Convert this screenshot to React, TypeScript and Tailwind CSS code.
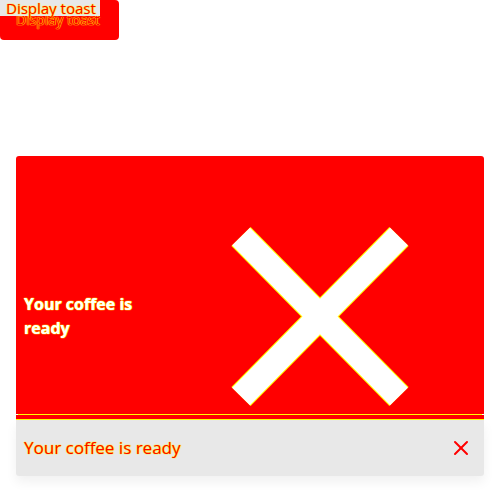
import { X } from 'lucide-react'

const outline = '[text-shadow:0_0_1px_#ffff00,0_0_1px_#ffff00,0_0_1px_#ffff00]'

export default function App() {
  return (
    <div className="relative w-[500px] h-[500px] bg-white font-['Open_Sans',sans-serif]">
      {/* trigger button */}
      <button className="relative flex items-center h-10 w-[119px] pl-4 rounded bg-[#ff0000] text-[14px] leading-6">
        <span className={`text-[#ff0000] ${outline} -mt-[1px]`}>Display toast</span>
        <span className={`absolute left-0 top-0 h-4 w-[100px] bg-[#e8e8e8] text-[15px] leading-4 pl-1.5 text-left text-[#ff0000] ${outline}`}>
          Display toast
        </span>
      </button>

      {/* toast viewport */}
      <div className="absolute left-4 right-4 top-[156px] flex flex-col">
        <div className="h-[258px] bg-[#ff0000] rounded-t-[3px] flex items-start px-2">
          <div className={`w-[130px] mt-[136px] text-white font-bold text-base leading-6 ${outline}`}>
            Your coffee is ready
          </div>
          <svg width="200" height="200" viewBox="0 0 200 200" className="ml-[62px] mt-[60px]">
            <g stroke="#ffff00" strokeWidth="27">
              <line x1="25" y1="20.5" x2="183" y2="180.5" />
              <line x1="183" y1="20.5" x2="25" y2="180.5" />
            </g>
            <g stroke="#ffffff" strokeWidth="25">
              <line x1="25" y1="20.5" x2="183" y2="180.5" />
              <line x1="183" y1="20.5" x2="25" y2="180.5" />
            </g>
          </svg>
        </div>
        <div className="h-px bg-[#ffff00] mx-[2px]" />
        <div className="h-[4px] bg-[#ff0000]" />
        <div className="h-px bg-[#ffff00]" />
        <div className="h-14 bg-[#e8e8e8] rounded-b-[3px] shadow-[0_6px_12px_rgba(0,0,0,0.06)] flex items-center justify-between px-2">
          <span className={`text-[#ff0000] text-[17px] ${outline}`}>Your coffee is ready</span>
          <X className="w-6 h-6 mr-[3px] text-[#ff0000]" strokeWidth={2} />
        </div>
      </div>
    </div>
  )
}
